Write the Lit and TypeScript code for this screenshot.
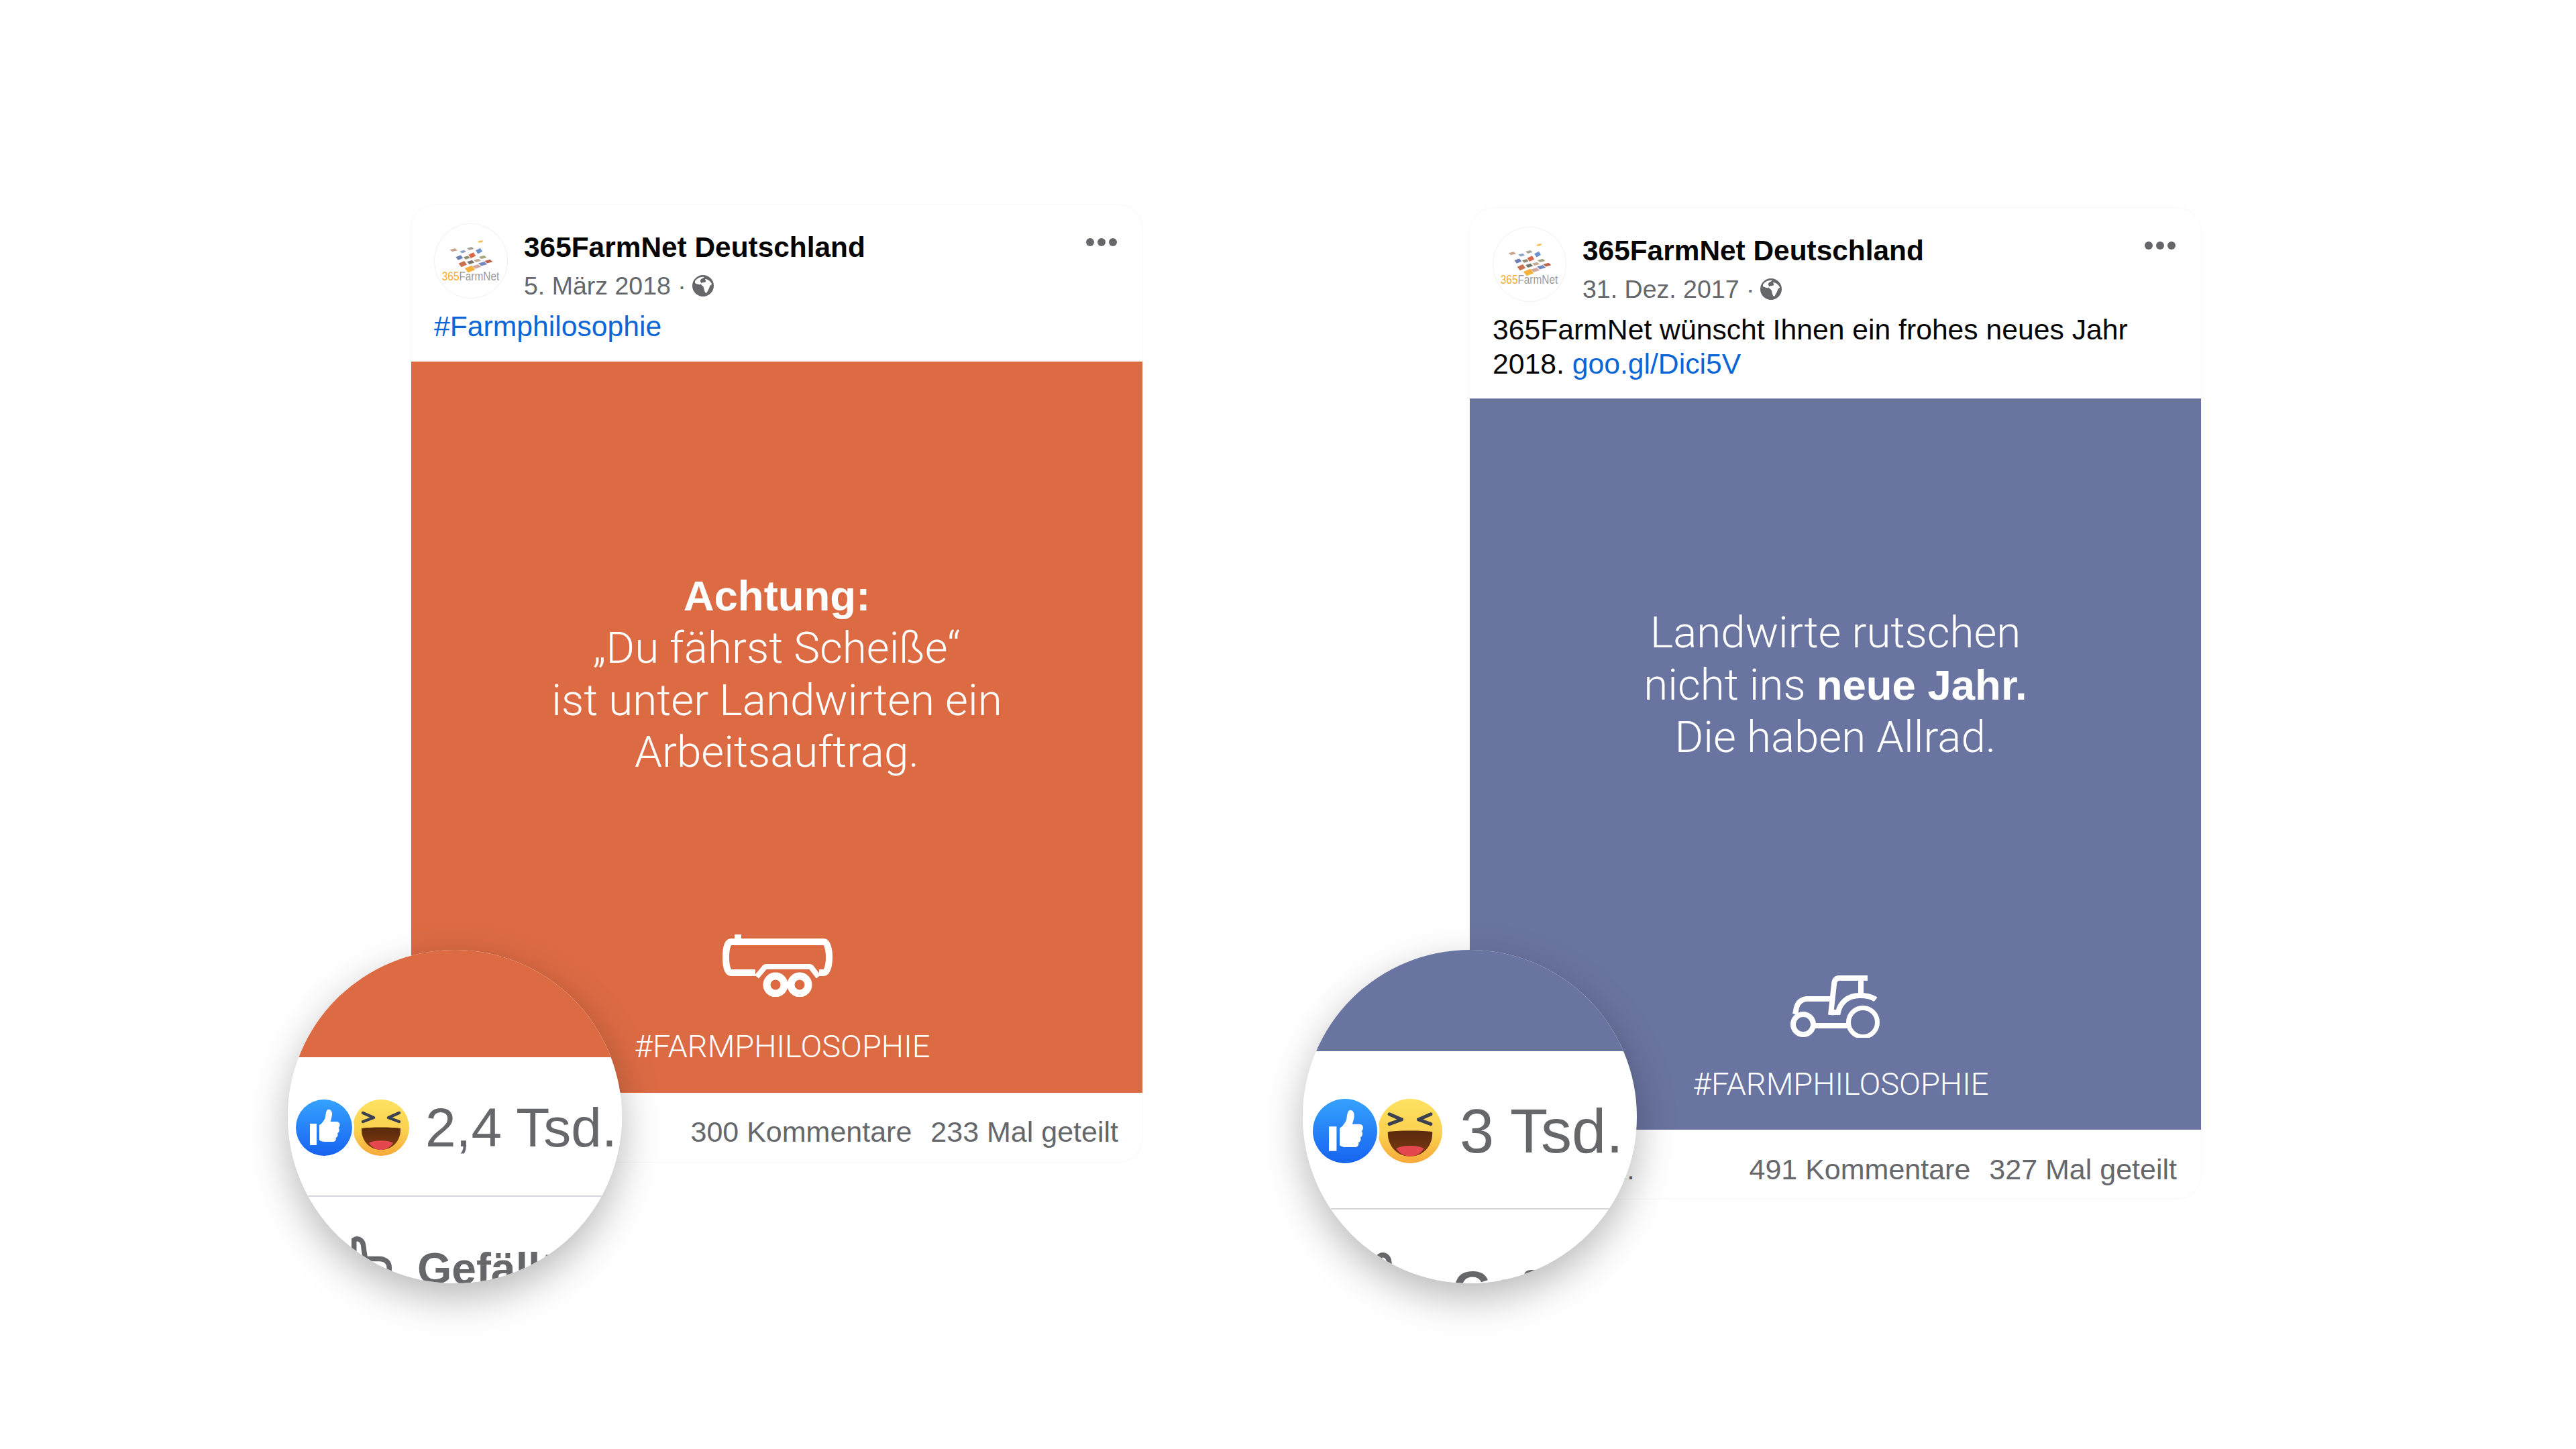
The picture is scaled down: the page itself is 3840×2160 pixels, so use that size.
import { LitElement, html, css, svg } from "lit";
import { customElement, property } from "lit/decorators.js";

const tiles: [number, number, number, number, string][] = [
  [120, 150, 155, 165, "#c9a58f"],
  [165, 157, 195, 172, "#8ea2c6"],
  [198, 143, 230, 158, "#a9a39a"],
  [238, 148, 268, 175, "#6f93cf"],
  [147, 180, 180, 203, "#6b7fb5"],
  [182, 183, 212, 200, "#8b8a73"],
  [205, 168, 238, 195, "#d9694a"],
  [252, 182, 288, 198, "#a7a580"],
  [160, 207, 198, 235, "#c8724f"],
  [198, 203, 232, 222, "#77766c"],
  [228, 197, 262, 213, "#c3ab95"],
  [250, 210, 290, 230, "#7488bd"],
  [278, 200, 315, 218, "#b9654a"],
  [188, 228, 235, 260, "#f6b13c"],
  [222, 222, 262, 243, "#d2a79d"],
];

function tilePoints(t: [number, number, number, number, string]) {
  const x0 = t[0] / 3 - 17, y0 = t[1] / 3 - 13, x1 = t[2] / 3 - 17, y1 = t[3] / 3 - 13;
  const w = x1 - x0, h = y1 - y0;
  return `${x0},${y0 + h * 0.4} ${x0 + w * 0.68},${y0} ${x1},${y0 + h * 0.6} ${x0 + w * 0.32},${y1}`;
}

@customElement("fb-logo")
class FbLogo extends LitElement {
  static styles = css`
    :host { display: block; width: 110px; height: 112px; border-radius: 50%; border: 1px solid #f1f1f1; box-sizing: border-box; flex: none; }
    svg { display: block; width: 100%; height: 100%; }
    .a { fill: #f5ab2f; font: 400 18px "Liberation Sans", sans-serif; }
    .b { fill: #9a9a9a; font: 400 18px "Liberation Sans", sans-serif; }
  `;
  render() {
    return html`<svg viewBox="0 0 110 112">
      <path d="M65 27l5-2 4 0-3 3h-4z" fill="#f2b84a" />
      ${tiles.map((t) => svg`<polygon points=${tilePoints(t)} fill=${t[4]} />`)}
      <text x="11" y="86" textLength="87" lengthAdjust="spacingAndGlyphs"><tspan class="a">365</tspan><tspan class="b">FarmNet</tspan></text>
    </svg>`;
  }
}

const likeIcon = html`<svg class="emoji like" viewBox="0 0 84 84">
  <defs><linearGradient id="lg" x1="0" y1="0" x2="0" y2="1"><stop offset="0" stop-color="#35a2ff" /><stop offset="1" stop-color="#1763f0" /></linearGradient></defs>
  <circle cx="42" cy="42" r="45" fill="#fff" />
  <circle cx="42" cy="42" r="42" fill="url(#lg)" />
  <path d="M21 36h10v32H21z" fill="#fff" />
  <path d="M35 38c3-1 8-7 9-12 .7-3 .6-9 3.500-11 4-1.500 7 3 6.500 7.500-.4 4-1.500 7-2.500 10.500h9c3.500 0 5.500 2.500 5 5.500-.2 2-1 3-2 3.800 1.200 1.200 1.600 3 1 5-.5 1.500-1.300 2.500-2.500 3 .8 1.500.8 3.200 0 4.700-.6 1-1.500 1.800-2.500 2.200.5 1.500.3 3-.7 4.300-1 1.200-2.300 1.500-4 1.500H43c-3.500 0-6-1-8-2.500z" fill="#fff" />
</svg>`;

const hahaIcon = html`<svg class="emoji haha" viewBox="0 0 84 84">
  <defs><linearGradient id="yg" x1="0" y1="0" x2="0" y2="1"><stop offset="0" stop-color="#fee262" /><stop offset=".55" stop-color="#fbd04f" /><stop offset="1" stop-color="#f6a93a" /></linearGradient>
  <linearGradient id="mg" x1="0" y1="0" x2="0" y2="1"><stop offset="0" stop-color="#5a2a0c" /><stop offset="1" stop-color="#7d3a14" /></linearGradient></defs>
  <circle cx="42" cy="42" r="42" fill="url(#yg)" />
  <path d="M15 20l16 7-16 6" fill="none" stroke="#3b4150" stroke-width="4.500" stroke-linecap="round" stroke-linejoin="round" />
  <path d="M69 20l-16 7 16 6" fill="none" stroke="#3b4150" stroke-width="4.500" stroke-linecap="round" stroke-linejoin="round" />
  <path d="M13 43c10-2 48-2 58 0 1 16-10 32-29 32S12 59 13 43z" fill="url(#mg)" />
  <path d="M24 65c6-5 30-5 36 0-5 7-11 10-18 10s-13-3-18-10z" fill="#e5474f" />
</svg>`;

const outlineThumb = html`<svg class="oth" viewBox="0 0 64 80"><path d="M4 4c6-4 14 0 15 10 .8 8 2 14 3 20h22c10 0 16 6 16 14v32H4z" fill="none" stroke="#65676b" stroke-width="8" /></svg>`;

@customElement("lens-circle")
class LensCircle extends LitElement {
  @property() count = "";
  static styles = css`
    :host { position: absolute; display: block; width: 498px; height: 497px; border-radius: 50%; box-shadow: 0 22px 60px rgba(0,0,0,.28); z-index: 2; }
    .in { width: 100%; height: 100%; border-radius: 50%; overflow: hidden; background: #fff; display: flex; flex-direction: column; font-family: "Liberation Sans", sans-serif; color: #65676b; }
    .top { flex: none; background: var(--c); height: var(--h1); }
    .row { flex: none; height: var(--h2); display: flex; align-items: center; box-sizing: border-box; padding: 4px 0 0 var(--pl); font-size: var(--fs); white-space: nowrap; border-bottom: 2px solid #d5d6de; }
    .emoji { display: block; width: var(--em); height: var(--em); overflow: visible; flex: none; }
    .like { position: relative; z-index: 1; }
    .haha { margin-left: var(--ov); margin-right: var(--tg); }
    .act { flex: none; display: flex; align-items: flex-start; padding: var(--ap); gap: var(--ag); font-size: var(--afs); font-weight: 700; white-space: nowrap; }
    .oth { width: 60px; height: 90px; flex: none; }
    .actt { padding-top: var(--at); line-height: 1; }
  `;
  render() {
    return html`<div class="in">
      <div class="top"></div>
      <div class="row">${likeIcon}${hahaIcon}<span>${this.count}</span></div>
      <div class="act">${outlineThumb}<span class="actt">Gefällt mir</span></div>
    </div>`;
  }
}

@customElement("app-root")
export class AppRoot extends LitElement {
  static styles = css`
    :host { display: block; width: 3840px; height: 2160px; background: #fff; overflow: hidden; position: relative; }
    .wrap { display: flex; align-items: flex-start; gap: 488px; padding: 305px 0 0 613px; }
    .post { width: 1090px; font-family: "Liberation Sans", sans-serif; flex: none; border-radius: 36px; box-shadow: 0 0 0 1px #f8f8f8; }
    .post2 { margin-top: 5px; }
    .head { display: flex; align-items: flex-start; gap: 24px; padding: 28px 38px 0 34px; }
    .meta { padding-top: 11px; flex: 1; min-width: 0; }
    .title { font-size: 42.400px; font-weight: 700; line-height: 50px; color: #050505; white-space: nowrap; }
    .date { margin-top: 10px; display: flex; align-items: center; gap: 8px; font-size: 37.500px; line-height: 44px; color: #65676b; white-space: nowrap; }
    .globe { width: 34px; height: 34px; flex: none; display: block; }
    .dots { display: flex; gap: 5px; margin-top: 22px; flex: none; }
    .dots i { display: block; width: 12px; height: 12px; border-radius: 50%; background: #65676b; }
    .text { padding: 13px 34px 27px; font-size: 42.700px; line-height: 50.500px; color: #050505; }
    .lnk { color: #0b66d8; }
    .img { height: 1090px; box-sizing: border-box; padding-top: 310px; display: flex; flex-direction: column; align-items: center; color: #fff; font-family: Roboto, sans-serif; font-weight: 300; }
    .img1 { background: #dc6b44; }
    .img2 { background: #6a74a0; }
    .quote { font-size: 65.500px; line-height: 77.500px; text-align: center; }
    .quote b { font-family: "Liberation Sans", sans-serif; font-weight: 700; font-size: 63.500px; }
    .icon { display: block; flex: none; }
    .trailer { width: 165px; height: 93px; margin-top: 233px; }
    .tractor { width: 135px; height: 93px; margin: 316px 0 -5px; }
    .tag { font-size: 47px; line-height: 54px; margin-top: 47px; padding-left: 16px; }
    .stats { height: 103px; box-sizing: border-box; padding: 15px 36px 0; display: flex; align-items: center; font-size: 43px; color: #65676b; gap: 28px; white-space: nowrap; }
    .likes { margin-right: auto; padding-left: 96px; }
    .l1 { left: 429px; top: 1416px; --c: #dc6b44; --h1: 160px; --h2: 208px; --pl: 12px; --ov: 1px; --tg: 24px; --em: 84px; --fs: 82px; --ap: 53px 0 0 95px; --ag: 38px; --afs: 66px; --at: 21px; }
    .l2 { left: 1942px; top: 1416px; --c: #6a74a0; --h1: 151px; --h2: 236px; --pl: 15px; --ov: 1px; --tg: 26px; --em: 96px; --fs: 92px; --ap: 58px 0 0 111px; --ag: 53px; --afs: 74px; --at: 24px; }
  `;
  private globe() {
    return html`<svg class="globe" viewBox="0 0 34 34"><circle cx="17" cy="17" r="16" fill="#65676b" /><path d="M5 10c4-5 9-7 14-6-2 2-5 2-6 5-1 2 2 3 1 5-1 3-6 0-9-1zM20 7c4 0 8 3 10 7-1 3-2 1-3 4-1 3-3 7-5 10-3-1-3-5-4-8 0-3-4-3-4-6 1-3 5-1 7-3 1-1-1-3-1-4z" fill="#fff" /></svg>`;
  }
  private header(date: string) {
    return html`<div class="head">
      <fb-logo></fb-logo>
      <div class="meta">
        <div class="title">365FarmNet Deutschland</div>
        <div class="date"><span>${date} ·</span>${this.globe()}</div>
      </div>
      <div class="dots"><i></i><i></i><i></i></div>
    </div>`;
  }
  render() {
    return html`<div class="wrap">
      <section class="post">
        ${this.header("5. März 2018")}
        <div class="text"><span class="lnk">#Farmphilosophie</span></div>
        <div class="img img1">
          <div class="quote"><b>Achtung:</b><br />„Du fährst Scheiße“<br />ist unter Landwirten ein<br />Arbeitsauftrag.</div>
          <svg class="icon trailer" viewBox="0 0 165 93" fill="none" stroke="#fff" stroke-width="10">
            <path d="M50 57H14C8 57 6 45 6 34S8 11 14 11H152C157 11 160 22 160 34S157 57 152 57H145" stroke-linejoin="round" />
            <path d="M19 0h10v8H19z" fill="#fff" stroke="none" />
            <path d="M52 63l11-13c1-2 2-2 4-2h63c2 0 3 0 4 2l10 13" stroke-width="8" />
            <circle cx="80" cy="75" r="13" stroke-width="11" />
            <circle cx="116" cy="75" r="13" stroke-width="11" />
          </svg>
          <div class="tag">#FARMPHILOSOPHIE</div>
        </div>
        <div class="stats"><span class="likes">2,4 Tsd.</span><span>300 Kommentare</span><span>233 Mal geteilt</span></div>
      </section>
      <section class="post post2">
        ${this.header("31. Dez. 2017")}
        <div class="text">365FarmNet wünscht Ihnen ein frohes neues Jahr<br />2018. <span class="lnk">goo.gl/Dici5V</span></div>
        <div class="img img2">
          <div class="quote">Landwirte rutschen<br />nicht ins <b>neue Jahr.</b><br />Die haben Allrad.</div>
          <svg class="icon tractor" viewBox="0 0 135 93" fill="none" stroke="#fff" stroke-width="8">
            <circle cx="19" cy="73" r="15" />
            <circle cx="108" cy="70" r="21.500" stroke-width="7" />
            <path d="M37 75h48" />
            <path d="M7 58l2-10c2-8 8-13 17-13h36" />
            <path d="M60 59l5-46c.5-6 3-9 8-9h42M105 5v25" />
            <path d="M58 55h13c3-14 14-25 32-25 9 0 19 2 24 6" />
          </svg>
          <div class="tag">#FARMPHILOSOPHIE</div>
        </div>
        <div class="stats"><span class="likes">3 Tsd.</span><span>491 Kommentare</span><span>327 Mal geteilt</span></div>
      </section>
    </div>
    <lens-circle class="l1" count="2,4 Tsd."></lens-circle>
    <lens-circle class="l2" count="3 Tsd."></lens-circle>`;
  }
}
